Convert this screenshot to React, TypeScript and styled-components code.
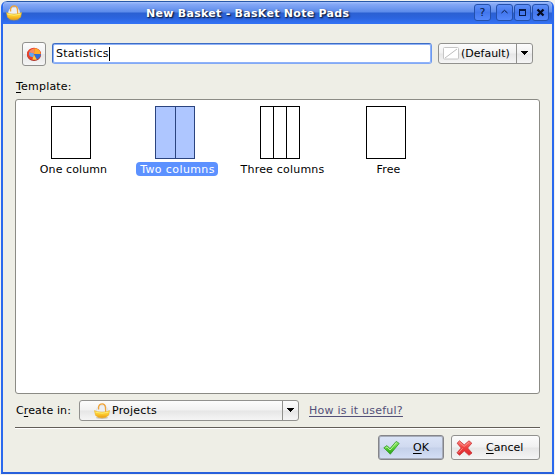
import React from 'react';
import styled, { createGlobalStyle, css } from 'styled-components';

const GlobalStyle = createGlobalStyle`
  *, *::before, *::after { box-sizing: border-box; }
  body { margin: 0; background: #eeeee9; font-family: "DejaVu Sans", sans-serif; font-size: 11px; color: #000; }
`;

const Desktop = styled.div`
  width: 555px;
  height: 475px;
  padding: 1px;
  background: #f1f1ee;
  overflow: hidden;
`;

const Window = styled.div`
  width: 553px;
  height: 473px;
  display: flex;
  flex-direction: column;
  background: #eeeee6;
  border: solid #2a69ee;
  border-width: 0 2px 2px;
  border-bottom-color: #2860db;
  border-radius: 6px 6px 0 0;
  overflow: hidden;
`;

const TitleBar = styled.header`
  flex: none;
  height: 23px;
  margin: 0 -2px;
  padding: 0 5px;
  display: flex;
  align-items: center;
  border-top: 1px solid #2858a8;
  border-radius: 6px 6px 0 0;
  background: linear-gradient(#a6c3ff 0, #86a9f6 2px, #5c8bea 10px, #2b60d2 11px, #2c64de 16px, #3473f6 22px);
`;

const Title = styled.h1`
  flex: 1;
  margin: 0;
  padding: 1px 0 0 124px;
  font-size: 11px;
  line-height: 21px;
  font-weight: bold;
  letter-spacing: 0.28px;
  white-space: nowrap;
  color: #fff;
  text-shadow: 1px 1px 1px #14264f, 1px 1px 2px #14264f;
`;

const TitleButtons = styled.div`
  display: flex;
  gap: 1px;
  padding-bottom: 1px;
`;

const TitleButton = styled.button<{ $apart?: boolean }>`
  width: 17px;
  height: 17px;
  margin: 0 ${p => (p.$apart ? 4 : 0)}px 0 0;
  padding: 0;
  display: grid;
  place-items: center;
  border: 1px solid #2450ab;
  border-radius: 3px;
  background: linear-gradient(#5e8ff8, #4377ed 50%, #5488fc);
  font: 11px/14px "DejaVu Sans", sans-serif;
  color: #071a48;
  svg { display: block; }
`;

const Content = styled.main`
  flex: 1;
  display: flex;
  flex-direction: column;
  padding: 18px 12px 0;
`;

const NameRow = styled.div`
  display: flex;
  align-items: flex-start;
  height: 37px;
  padding-left: 7px;
`;

const raised = css`
  border: 1px solid #91918e;
  border-radius: 3px;
  background: linear-gradient(#fcfcfc, #f1f1f1 48%, #e6e6e6 52%, #f5f5f5);
`;

const IconButton = styled.button`
  ${raised}
  width: 24px;
  height: 24px;
  padding: 0;
  display: grid;
  place-items: center;
  svg { display: block; }
`;

const NameField = styled.div`
  width: 380px;
  height: 21px;
  margin: 1px 6px 0;
  padding: 1px 0 0 3px;
  display: flex;
  align-items: center;
  border: 1px solid;
  border-color: #3d6dc4 #6b98ee #82a9f5 #3d6dc4;
  border-radius: 3px;
  box-shadow: inset 0 0 0 1px #8fb2f8;
  background: #fff;
`;

const Caret = styled.span`
  width: 1px;
  height: 14px;
  background: #000;
`;

const Text = styled.span<{ $spacing?: number }>`
  letter-spacing: ${p => p.$spacing ?? 0}px;
  line-height: 14px;
  white-space: nowrap;
`;

const Combo = styled.div<{ $width: number; $indent: number; $top?: number }>`
  ${raised}
  width: ${p => p.$width}px;
  height: 21px;
  margin-top: ${p => p.$top ?? 0}px;
  display: flex;
  align-items: stretch;
  padding-left: ${p => p.$indent}px;
`;

const ComboValue = styled.div`
  flex: 1;
  display: flex;
  align-items: center;
  gap: 2px;
`;

const ComboArrow = styled.div`
  width: 16px;
  display: grid;
  place-items: center;
  border-left: 1px solid #91918e;
  svg { display: block; }
`;

const Mnemonic = styled.span`
  text-decoration: underline;
  text-decoration-thickness: 1px;
  text-underline-offset: 2px;
`;

const TemplateLabel = styled.label`
  height: 20px;
  padding-left: 1px;
  line-height: 15px;
`;

const TemplateList = styled.ul`
  height: 295px;
  margin: 0;
  padding: 6px 0 0 5px;
  display: flex;
  align-items: flex-start;
  list-style: none;
  border: 1px solid #8b8b85;
  border-radius: 3px;
  background: #fff;
`;

const TemplateItem = styled.li<{ $width: number }>`
  width: ${p => p.$width}px;
  display: flex;
  flex-direction: column;
  align-items: center;
  gap: 3px;
`;

const Sheet = styled.div<{ $selected?: boolean }>`
  width: 40px;
  height: 53px;
  margin-right: 4px;
  display: flex;
  border: 1px solid ${p => (p.$selected ? '#2b447f' : '#000')};
  background: ${p => (p.$selected ? '#aec6ff' : '#fff')};
`;

const SheetColumn = styled.div<{ $selected?: boolean }>`
  flex: 1;
  &:not(:first-child) { border-left: 1px solid ${p => (p.$selected ? '#2b447f' : '#000')}; }
`;

const Caption = styled.span<{ $selected?: boolean; $spacing: number }>`
  height: 14px;
  padding: 0 3px 0 4px;
  line-height: 15px;
  letter-spacing: ${p => p.$spacing}px;
  white-space: nowrap;
  border-radius: 4px;
  color: ${p => (p.$selected ? '#fff' : '#000')};
  background: ${p => (p.$selected ? '#5c91ff' : 'transparent')};
`;

const ParentRow = styled.div`
  height: 33px;
  padding: 6px 0 0 1px;
  display: flex;
`;

const ParentLabel = styled.label`
  width: 63px;
  line-height: 21px;
`;

const HelpLink = styled.a`
  margin-left: 10px;
  line-height: 21px;
  color: #535078;
  white-space: nowrap;
  text-decoration: underline;
  text-decoration-thickness: 1px;
  text-underline-offset: 2px;
`;

const Separator = styled.hr`
  width: 100%;
  height: 2px;
  margin: 0;
  border: 0;
  border-top: 1px solid #625e58;
  border-bottom: 1px solid #fff;
`;

const Actions = styled.footer`
  display: flex;
  justify-content: flex-end;
  gap: 7px;
  padding-top: 6px;
`;

const ActionButton = styled.button<{ $width: number; $primary?: boolean; $gap: number }>`
  ${raised}
  width: ${p => p.$width}px;
  height: 25px;
  padding: 0 0 0 4px;
  display: flex;
  align-items: center;
  gap: ${p => p.$gap}px;
  font: 11px "DejaVu Sans", sans-serif;
  color: #000;
  svg { display: block; flex: none; }
  ${p => p.$primary && css`
    border-color: #85858a;
    box-shadow: inset 0 0 0 1px #a7adbb;
    background: linear-gradient(#dbe4f7, #d0daf0 48%, #c4d0e9 52%, #d4dff6);
  `}
`;

const BasketIcon = () => (
  <svg width="16" height="16" viewBox="0 0 16 16">
    <defs>
      <linearGradient id="basket" x2="0" y2="1">
        <stop stopColor="#ffe451" /><stop offset=".55" stopColor="#fac52a" /><stop offset="1" stopColor="#e99a14" />
      </linearGradient>
    </defs>
    <ellipse cx="8" cy="14.8" rx="6" ry="1.1" fill="#9b875e" opacity=".45" />
    <path d="M2 8 3.5 4.5 6 2.5 11 2 13 5 14.5 9H2Z" fill="#eceff3" stroke="#d5d8dc" strokeWidth=".6" />
    <path d="M4.6 6.5V3.6Q5.5 .9 8.2 .9Q11 .9 11.4 4L11.8 10" fill="none" stroke="#efa43a" strokeWidth="1.3" />
    <path d="M.5 7.6Q3 9.2 8 9.2Q13 9.2 15.5 7.6L14.6 12.2Q12 14.8 8 14.8Q4 14.8 1.6 12.4Z" fill="url(#basket)" stroke="#eeae20" strokeWidth=".6" />
    <path d="M1.5 9.2Q8 11.2 14.5 9.2" fill="none" stroke="#fff27a" strokeWidth=".8" />
  </svg>
);

const PieIcon = () => (
  <svg width="16" height="16" viewBox="0 0 16 16">
    <ellipse cx="8" cy="8.9" rx="7" ry="6.1" fill="#a93226" />
    <ellipse cx="8" cy="8" rx="7" ry="6.2" fill="#e8412a" />
    <path d="M8 7.8 3 6.2Q4.8 2.6 8.6 2.6Z" fill="#f58a63" />
    <path d="M8 8.2 8.6 2.2Q13.6 2.6 14.5 7L14.5 8.2Z" fill="#ffae2b" />
    <path d="M8 8 14.8 8Q14.6 11.8 10.8 13.4Z" fill="#2f6fd8" />
    <path d="M7.6 8 10.8 13.4Q9 14.2 6.5 13.6Z" fill="#ffc93c" />
    <path d="M3 6.2 8 7.6 7.2 11.2 4.2 10.6Q2.7 8.5 3 6.2Z" fill="#62a6f2" />
  </svg>
);

const CheckIcon = () => (
  <svg width="17" height="16" viewBox="0 0 17 16">
    <defs><linearGradient id="check" x2="0" y2="1"><stop stopColor="#9bea73" /><stop offset=".5" stopColor="#55cf35" /><stop offset="1" stopColor="#299d18" /></linearGradient></defs>
    <path d="M.8 7.8 4 5.6 7 8.6 13.2 1.4 16.2 3.4 7.3 14.2Z" fill="url(#check)" stroke="#329b29" strokeWidth=".8" strokeLinejoin="round" />
    <path d="M2.3 8 4 6.9 7.1 10 13.4 2.7" fill="none" stroke="#c5f9a6" strokeWidth=".9" />
  </svg>
);

const CrossIcon = () => (
  <svg width="17" height="16" viewBox="0 0 17 16">
    <defs><linearGradient id="cross" x2="0" y2="1"><stop stopColor="#fa8078" /><stop offset=".5" stopColor="#ef3d3c" /><stop offset="1" stopColor="#db2830" /></linearGradient></defs>
    <path d="M3.5.8 8.2 4.9 13 .8 15.8 3.2 11.6 8 16 13 13 15.3 8.3 11 3.5 15.3 1 12.8 5.2 8 1.1 3.2Z" fill="url(#cross)" stroke="#c93135" strokeWidth=".8" strokeLinejoin="round" />
    <path d="M3.5 2.2 8.1 6.4 13 2.2M2.5 12.8 6.6 8.3" fill="none" stroke="#ff9b92" strokeWidth=".8" />
  </svg>
);

const NoColorIcon = () => (
  <svg width="16" height="13" viewBox="0 0 16 13">
    <rect x=".5" y=".5" width="15" height="11.5" rx="1" fill="#fff" stroke="#c6c6c6" />
    <path d="M2 11 14 2" stroke="#bdbdbd" strokeWidth="1" />
  </svg>
);

const DownArrow = () => (
  <svg width="8" height="5" viewBox="0 0 8 5" shapeRendering="crispEdges"><path d="M0 0H7V1H6V2H5V3H4V4H3V3H2V2H1V1H0Z" /></svg>
);

const templates = [
  { name: 'One column', columns: 1, spacing: 0.1, width: 104 },
  { name: 'Two columns', columns: 2, spacing: 0.4, width: 104, selected: true },
  { name: 'Three columns', columns: 3, spacing: 0.2, width: 106 },
  { name: 'Free', columns: 1, spacing: 0.2, width: 106 },
];

export default function App() {
  return (
    <>
      <GlobalStyle />
      <Desktop>
        <Window>
          <TitleBar>
            <BasketIcon />
            <Title>New Basket - BasKet Note Pads</Title>
            <TitleButtons>
              <TitleButton $apart>?</TitleButton>
              <TitleButton>
                <svg width="9" height="9" viewBox="0 0 9 9"><path d="M1.5 5 4.5 2.3 7.5 5" fill="none" stroke="#071a48" /></svg>
              </TitleButton>
              <TitleButton>
                <svg width="7" height="7" viewBox="0 0 7 7" shapeRendering="crispEdges"><path d="M0 0H7V7H0ZM1 2V6H6V2Z" fillRule="evenodd" fill="#071a48" /></svg>
              </TitleButton>
              <TitleButton>
                <svg width="9" height="9" viewBox="0 0 9 9"><path d="M1.5 1.5 7.5 7.5M7.5 1.5 1.5 7.5" stroke="#050b20" strokeWidth="2.3" /></svg>
              </TitleButton>
            </TitleButtons>
          </TitleBar>
          <Content>
            <NameRow>
              <IconButton><PieIcon /></IconButton>
              <NameField><Text $spacing={0.25}>Statistics</Text><Caret /></NameField>
              <Combo $width={95} $indent={4} $top={1}>
                <ComboValue><NoColorIcon /><Text>(Default)</Text></ComboValue>
                <ComboArrow><DownArrow /></ComboArrow>
              </Combo>
            </NameRow>
            <TemplateLabel><Text $spacing={0.2}><Mnemonic>T</Mnemonic>emplate:</Text></TemplateLabel>
            <TemplateList>
              {templates.map(t => (
                <TemplateItem key={t.name} $width={t.width}>
                  <Sheet $selected={t.selected}>
                    {Array.from({ length: t.columns }, (_, i) => <SheetColumn key={i} $selected={t.selected} />)}
                  </Sheet>
                  <Caption $selected={t.selected} $spacing={t.spacing}>{t.name}</Caption>
                </TemplateItem>
              ))}
            </TemplateList>
            <ParentRow>
              <ParentLabel><Text $spacing={0.12}>C<Mnemonic>r</Mnemonic>eate in:</Text></ParentLabel>
              <Combo $width={220} $indent={14}>
                <ComboValue><BasketIcon /><Text $spacing={0.2}>Projects</Text></ComboValue>
                <ComboArrow><DownArrow /></ComboArrow>
              </Combo>
              <HelpLink><Text $spacing={0.24}>How is it useful?</Text></HelpLink>
            </ParentRow>
            <Separator />
            <Actions>
              <ActionButton $width={66} $gap={13} $primary><CheckIcon /><Text><Mnemonic>O</Mnemonic>K</Text></ActionButton>
              <ActionButton $width={89} $gap={13}><CrossIcon /><Text><Mnemonic>C</Mnemonic>ancel</Text></ActionButton>
            </Actions>
          </Content>
        </Window>
      </Desktop>
    </>
  );
}
